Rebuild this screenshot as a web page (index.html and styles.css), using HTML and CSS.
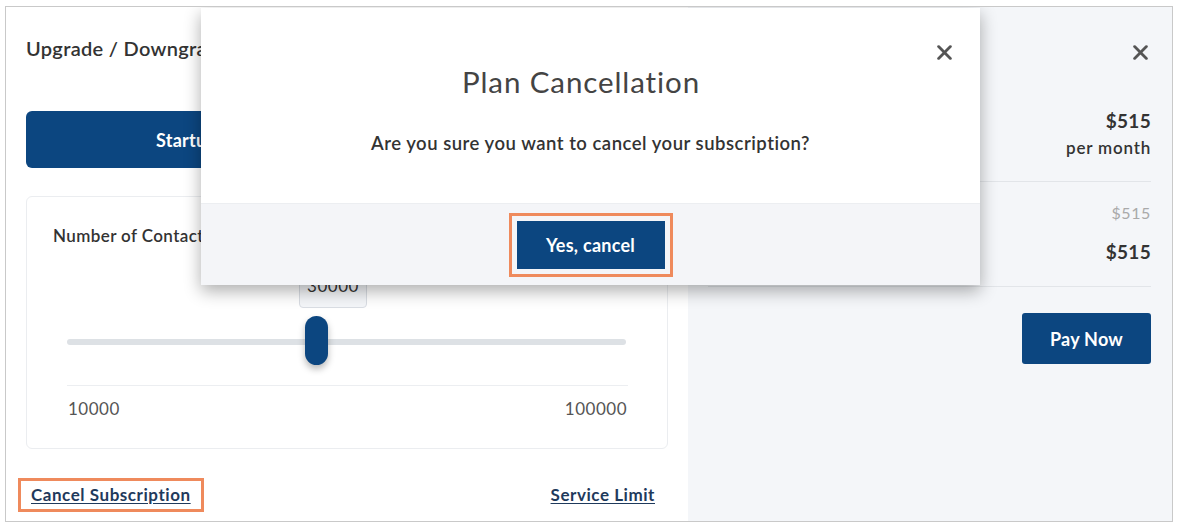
FILE: index.html
```html
<!DOCTYPE html>
<html lang="en">
<head>
    <meta charset="UTF-8">
    <meta name="viewport" content="width=device-width, initial-scale=1.0">
    <title>Plan Cancellation</title>
    <link rel="stylesheet" href="styles.css">
</head>
<body>
    <div class="frame">
        <!-- Plan picker -->
        <section class="plan-panel">
            <h2 class="panel-title">Upgrade / Downgrade Plan</h2>

            <div class="plan-tabs">
                <button class="plan-tab active">Startup</button>
                <button class="plan-tab">Business</button>
            </div>

            <div class="contacts-card">
                <div class="contacts-label">Number of Contacts</div>
                <div class="range">
                    <div class="range-track"></div>
                    <div class="range-tip">30000</div>
                    <div class="range-thumb"></div>
                </div>
                <div class="range-divider"></div>
                <div class="range-limits">
                    <span>10000</span>
                    <span>100000</span>
                </div>
            </div>

            <div class="panel-links">
                <a href="#" class="panel-link highlighted">Cancel Subscription</a>
                <a href="#" class="panel-link">Service Limit</a>
            </div>
        </section>

        <!-- Summary -->
        <aside class="summary-panel">
            <div class="summary-head">
                <button class="close-btn" aria-label="Close">
                    <svg viewBox="0 0 14 14" width="15" height="15"><path d="M1.5 1.5 L12.5 12.5 M12.5 1.5 L1.5 12.5" stroke="#555" stroke-width="2.6" stroke-linecap="round"/></svg>
                </button>
            </div>
            <div class="price-main">$515</div>
            <div class="price-sub">per month</div>
            <div class="summary-divider"></div>
            <div class="price-old">$515</div>
            <div class="price-total">$515</div>
            <div class="summary-divider lower"></div>
            <div class="summary-actions">
                <button class="btn-primary pay-btn">Pay Now</button>
            </div>
        </aside>

        <!-- Confirm modal -->
        <div class="modal">
            <div class="modal-head">
                <h1 class="modal-title">Plan Cancellation</h1>
                <button class="close-btn" aria-label="Close">
                    <svg viewBox="0 0 14 14" width="15" height="15"><path d="M1.5 1.5 L12.5 12.5 M12.5 1.5 L1.5 12.5" stroke="#555" stroke-width="2.6" stroke-linecap="round"/></svg>
                </button>
            </div>
            <p class="modal-text">Are you sure you want to cancel your subscription?</p>
            <div class="modal-foot">
                <button class="btn-primary confirm-btn">Yes, cancel</button>
            </div>
        </div>
    </div>
</body>
</html>
```

FILE: styles.css
```css
:root {
    --navy: #0c4680;
    --text: #333;
    --muted: #555;
    --line: #e6e8eb;
    --side-bg: #f4f6f9;
    --mark: #ef8a5c;
}

* {
    margin: 0;
    padding: 0;
    box-sizing: border-box;
}

body {
    font-family: 'Lato', 'Liberation Sans', sans-serif;
    background: #fff;
    color: var(--text);
}

button {
    font-family: inherit;
    border: none;
    background: none;
    cursor: pointer;
}

.frame {
    position: relative;
    margin: 6px 0 0 5px;
    width: 1168px;
    height: 516px;
    border: 1px solid #c9c9c9;
    display: grid;
    grid-template-columns: 682px 1fr;
    overflow: hidden;
}

/* Left panel */
.plan-panel {
    padding: 29px 20px 0 20px;
    background: #fff;
}

.panel-title {
    font-size: 20px;
    line-height: 24px;
    font-weight: 600;
    letter-spacing: 0.3px;
    color: #333;
}

.plan-tabs {
    margin-top: 51px;
    display: grid;
    grid-template-columns: 1fr 1fr;
}

.plan-tab {
    height: 57px;
    font-size: 18px;
    font-weight: 700;
    letter-spacing: 0.3px;
    color: var(--navy);
    background: #fff;
    border-radius: 0 6px 6px 0;
}

.plan-tab.active {
    background: var(--navy);
    color: #fff;
    border-radius: 6px 0 0 6px;
}

.contacts-card {
    margin-top: 28px;
    border: 1px solid #ebedf0;
    border-radius: 6px;
    padding: 29px 27px 29px 27px;
}

.contacts-label {
    font-size: 17px;
    line-height: 20px;
    font-weight: 600;
    letter-spacing: 0.4px;
    margin-left: -1px;
}

.range {
    position: relative;
    margin: 28px 14px 0 13px;
    height: 91px;
}

.range-track {
    position: absolute;
    left: 0;
    right: 0;
    top: 65px;
    height: 6px;
    border-radius: 3px;
    background: #dde1e5;
}

.range-tip {
    position: absolute;
    top: -10px;
    left: 232px;
    width: 68px;
    height: 44px;
    padding-top: 2px;
    line-height: 38px;
    text-align: center;
    font-size: 17px;
    letter-spacing: 0.5px;
    color: #333;
    background: #f4f6f9;
    border: 1px solid #d9dde3;
    border-radius: 4px;
}

.range-thumb {
    position: absolute;
    top: 42px;
    left: 238px;
    width: 23px;
    height: 49px;
    border-radius: 12px;
    background: var(--navy);
    box-shadow: 0 4px 7px rgba(0, 0, 0, 0.28);
}

.range-divider {
    margin: 20px 12px 0 13px;
    height: 1px;
    background: #eceef1;
}

.range-limits {
    margin: 13px 13px 0 14px;
    display: flex;
    justify-content: space-between;
    font-size: 17px;
    line-height: 20px;
    letter-spacing: 0.5px;
    color: var(--muted);
}

.panel-links {
    margin: 29px 0 0 -8px;
    display: flex;
    justify-content: space-between;
}

.panel-link {
    padding: 5px 10px;
    border: 3px solid transparent;
    font-size: 17px;
    line-height: 18px;
    font-weight: 700;
    letter-spacing: 0.55px;
    color: #1f3a5c;
    text-decoration: underline;
    text-underline-offset: 2px;
}

.panel-link.highlighted {
    border-color: var(--mark);
}

/* Right panel */
.summary-panel {
    background: var(--side-bg);
    padding: 34px 21px 0 20px;
    text-align: right;
}

.summary-head {
    display: flex;
    justify-content: flex-end;
}

.close-btn {
    width: 22px;
    height: 22px;
    display: flex;
    align-items: center;
    justify-content: center;
}

.price-main {
    margin-top: 47px;
    font-size: 19px;
    line-height: 22px;
    font-weight: 700;
    letter-spacing: 0.3px;
    color: #333;
}

.price-sub {
    margin-top: 6px;
    font-size: 17px;
    line-height: 20px;
    font-weight: 600;
    letter-spacing: 0.8px;
    color: #333;
}

.summary-divider {
    margin-top: 23px;
    height: 1px;
    background: #e2e5e9;
}

.price-old {
    margin-top: 21px;
    font-size: 16px;
    line-height: 20px;
    letter-spacing: 0.6px;
    color: #a9a9a9;
}

.price-total {
    margin-top: 18px;
    font-size: 19px;
    line-height: 22px;
    font-weight: 700;
    letter-spacing: 0.3px;
    color: #333;
}

.summary-divider.lower {
    margin-top: 23px;
}

.summary-actions {
    margin-top: 26px;
    display: flex;
    justify-content: flex-end;
}

.btn-primary {
    background: var(--navy);
    color: #fff;
    font-size: 18px;
    font-weight: 700;
    letter-spacing: 0.25px;
    border-radius: 3px;
}

.pay-btn {
    width: 129px;
    height: 51px;
}

/* Modal */
.modal {
    position: absolute;
    top: 1px;
    left: 195px;
    width: 779px;
    height: 277px;
    background: #fff;
    display: flex;
    flex-direction: column;
    box-shadow: 0 6px 16px rgba(0, 0, 0, 0.32);
}

.modal-head {
    display: flex;
    align-items: flex-start;
    padding: 33px 25px 0 28px;
}

.modal-title {
    flex: 1;
    margin-top: 24px;
    text-align: center;
    font-size: 29.5px;
    line-height: 34px;
    font-weight: 400;
    letter-spacing: 0.9px;
    color: #444;
}

.modal-text {
    margin-top: 32px;
    text-align: center;
    font-size: 18.5px;
    line-height: 24px;
    font-weight: 600;
    letter-spacing: 0.5px;
    color: #333;
}

.modal-foot {
    margin-top: auto;
    height: 82px;
    background: #f4f5f8;
    border-top: 1px solid #eceef1;
    display: flex;
    align-items: center;
    justify-content: center;
}

.confirm-btn {
    width: 148px;
    height: 48px;
    border-radius: 0;
    outline: 3px solid var(--mark);
    outline-offset: 5px;
}
```
